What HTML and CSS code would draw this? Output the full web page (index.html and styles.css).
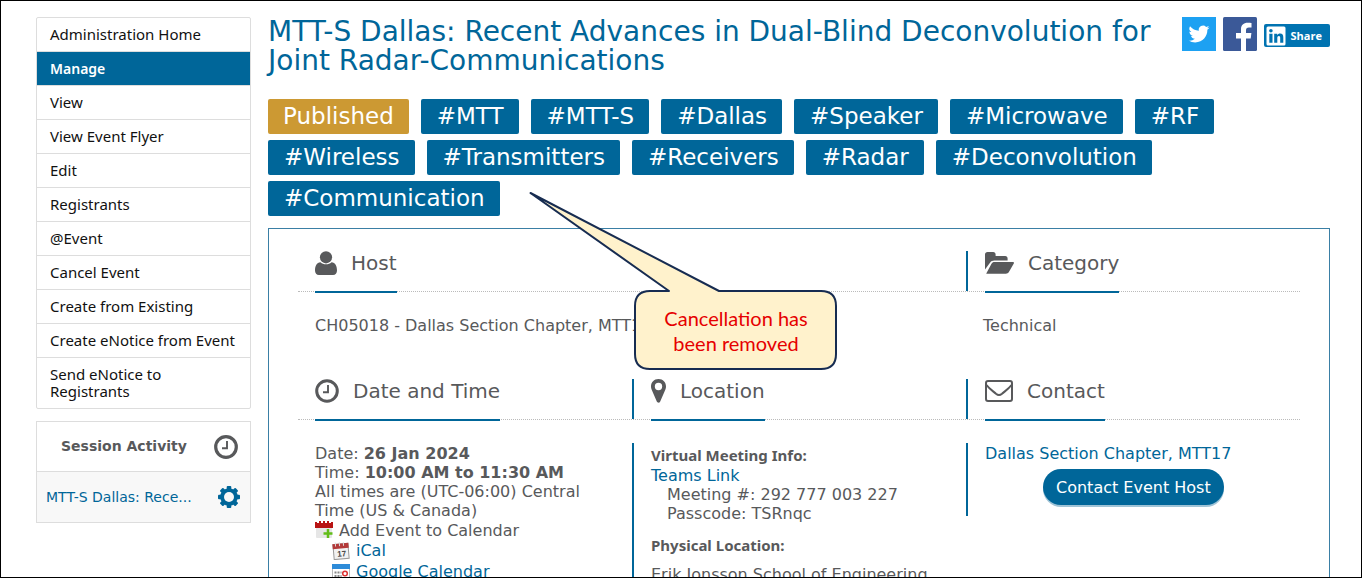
FILE: index.html
```html
<!DOCTYPE html>
<html lang="en">
<head>
<meta charset="UTF-8">
<title>MTT-S Dallas: Manage Event</title>
<meta name="viewport" content="width=device-width, initial-scale=1">
<link rel="stylesheet" href="styles.css">
</head>
<body>
  <div class="page">
    <aside class="sidebar">
      <nav class="menu">
        <a href="#">Administration Home</a>
        <a href="#" class="active">Manage</a>
        <a href="#">View</a>
        <a href="#">View Event Flyer</a>
        <a href="#">Edit</a>
        <a href="#">Registrants</a>
        <a href="#">@Event</a>
        <a href="#">Cancel Event</a>
        <a href="#">Create from Existing</a>
        <a href="#">Create eNotice from Event</a>
        <a href="#">Send eNotice to Registrants</a>
      </nav>

      <div class="session">
        <div class="session-head">
          <span>Session Activity</span>
          <svg class="icon-clock" viewBox="0 0 24 24"><circle cx="12" cy="12" r="10.3" fill="none" stroke="currentColor" stroke-width="3.2"/><path d="M13 6v7.3H8" fill="none" stroke="currentColor" stroke-width="1.9"/></svg>
        </div>
        <div class="session-row">
          <a href="#">MTT-S Dallas: Rece...</a>
          <button class="gear" aria-label="Session settings">
            <svg viewBox="0 0 24 24"><g fill="currentColor"><rect x="9.7" y="1" width="4.6" height="22" rx="1"/><rect x="9.7" y="1" width="4.6" height="22" rx="1" transform="rotate(45 12 12)"/><rect x="9.7" y="1" width="4.6" height="22" rx="1" transform="rotate(90 12 12)"/><rect x="9.7" y="1" width="4.6" height="22" rx="1" transform="rotate(135 12 12)"/><circle cx="12" cy="12" r="8.8"/></g><circle cx="12" cy="12" r="5" fill="#f8f8f8"/></svg>
          </button>
        </div>
      </div>
    </aside>

    <main class="main">
      <header class="title-row">
        <h1>MTT-S Dallas: Recent Advances in Dual-Blind Deconvolution for Joint Radar-Communications</h1>
        <div class="share">
          <a href="#" aria-label="Share on Twitter">
            <svg class="square" viewBox="0 0 34 34"><rect width="34" height="34" fill="#1da1f2"/><path transform="translate(6.6 6.6) scale(.87)" fill="#fff" d="M23.95 4.57a10 10 0 0 1-2.82.77 4.96 4.96 0 0 0 2.16-2.72c-.95.55-2 .95-3.13 1.18a4.92 4.92 0 0 0-8.38 4.48A13.97 13.97 0 0 1 1.64 3.16a4.92 4.92 0 0 0 1.52 6.57 4.9 4.9 0 0 1-2.23-.61v.06a4.92 4.92 0 0 0 3.95 4.83 5 5 0 0 1-2.21.08 4.94 4.94 0 0 0 4.6 3.42A9.87 9.87 0 0 1 0 19.54a13.99 13.99 0 0 0 7.55 2.21c9.05 0 14-7.5 14-13.98 0-.21 0-.42-.02-.63a9.94 9.94 0 0 0 2.46-2.55z"/></svg>
          </a>
          <a href="#" aria-label="Share on Facebook">
            <svg class="square" viewBox="0 0 34 34"><rect width="34" height="34" rx="1.5" fill="#3b5998"/><path fill="#fff" d="M18 34V21.5h-5V16h5v-3.500c0-4.500 2.700-6.700 6.700-6.700 1.800 0 3.300.1 3.800.2v4.600h-2.600c-2 0-2.900 1-2.900 2.600V16h5.400l-.7 5.500H23V34z"/></svg>
          </a>
          <a href="#" class="linkedin">
            <svg viewBox="0 0 20 20"><rect x=".5" y=".5" width="19" height="19" rx="1.500" fill="#fff"/><g fill="#0073b1"><circle cx="4.900" cy="4.800" r="1.800"/><path d="M3.300 7.800h3.200v9H3.300zM8.200 7.800h3v1.300c.6-1 1.600-1.600 2.900-1.600 2.400 0 3.200 1.500 3.200 3.900v5.400h-3.100V12c0-1.200-.3-2-1.300-2-1.100 0-1.600.8-1.600 2v4.800H8.200z"/></g></svg>
            <span>Share</span>
          </a>
        </div>
      </header>

      <div class="tags">
        <span class="tag published">Published</span>
        <a href="#" class="tag">#MTT</a>
        <a href="#" class="tag">#MTT-S</a>
        <a href="#" class="tag">#Dallas</a>
        <a href="#" class="tag">#Speaker</a>
        <a href="#" class="tag">#Microwave</a>
        <a href="#" class="tag">#RF</a>
        <a href="#" class="tag">#Wireless</a>
        <a href="#" class="tag">#Transmitters</a>
        <a href="#" class="tag">#Receivers</a>
        <a href="#" class="tag">#Radar</a>
        <a href="#" class="tag">#Deconvolution</a>
        <a href="#" class="tag">#Communication</a>
      </div>

      <div class="details">
        <div class="cols heads">
          <div class="head wide">
            <h2><svg class="icon-user" viewBox="0 0 22 24"><circle cx="11" cy="6.300" r="6.100"/><path d="M5.500 11.200c1.500 1.400 3.300 2.100 5.500 2.100s4-.7 5.500-2.100c3.800.4 5.500 3.600 5.500 8.200 0 2.700-1.500 4.600-4 4.600H4c-2.500 0-4-1.900-4-4.600 0-4.600 1.700-7.800 5.500-8.200z"/></svg>Host</h2>
          </div>
          <div class="head ruled">
            <h2><svg class="icon-folder" viewBox="0 0 29 22"><path d="M0 17.500V2.500C0 1 1 0 2.500 0h5.700c1.500 0 2.400 1 2.400 2.500V4h9.600c1.500 0 2.400 1 2.400 2.400v2.100H9.200c-1.600 0-3 .7-4 1.900z"/><path d="M1.400 21.200 6.500 11.800c.6-1.200 1.600-1.800 3-1.800H28c1 0 1.200.7.800 1.500l-4.900 8.600c-.7 1.200-1.700 1.700-3 1.700H2c-.7 0-.9-.2-.6-.6z"/></svg>Category</h2>
          </div>
        </div>
        <div class="cols bodies first">
          <div class="body wide">CH05018 - Dallas Section Chapter, MTT17</div>
          <div class="body last">Technical</div>
        </div>

        <div class="cols heads">
          <div class="head">
            <h2><svg class="icon-clock" viewBox="0 0 24 24"><circle cx="12" cy="12" r="10.3" fill="none" stroke="currentColor" stroke-width="3"/><path d="M13 6v7.300H8" fill="none" stroke="currentColor" stroke-width="1.900"/></svg>Date and Time</h2>
          </div>
          <div class="head ruled">
            <h2><svg class="icon-pin" viewBox="0 0 15 24"><path fill-rule="evenodd" d="M7.500 0C12 0 15 3.200 15 7.500c0 1.200-.2 2.100-.6 3L9.200 22.500c-.6 1.600-2.800 1.600-3.400 0L.6 10.500C.2 9.600 0 8.700 0 7.500 0 3.200 3 0 7.500 0zm0 3.800a3.700 3.700 0 1 0 0 7.400 3.700 3.700 0 0 0 0-7.400z"/></svg>Location</h2>
          </div>
          <div class="head ruled">
            <h2><svg class="icon-mail" viewBox="0 0 28 22"><g fill="none" stroke="currentColor" stroke-width="2"><rect x="1" y="1" width="26" height="20" rx="2"/><path d="M1.500 5c3 4 7 6.500 9.500 8.800 2 1.700 4 1.700 6 0C19.500 11.500 23.500 9 26.500 5"/></g></svg>Contact</h2>
          </div>
        </div>
        <div class="cols bodies">
          <div class="body">
            <div>Date: <b>26 Jan 2024</b></div>
            <div>Time: <b>10:00 AM to 11:30 AM</b></div>
            <div>All times are (UTC-06:00) Central Time (US &amp; Canada)</div>
            <div class="cal-title">
              <svg viewBox="0 0 18 18"><rect x="1" y="2" width="16" height="15" rx="1" fill="#e6e6e6"/><path d="M0 1h2v1h2V0h2v2h2V0h2v2h2V0h2v2h2V1h2v6H0z" fill="#b81414"/><path d="M13 8v9M8.500 12.500h9" stroke="#62bd19" stroke-width="2.500"/></svg>
              Add Event to Calendar
            </div>
            <ul class="calendars">
              <li>
                <svg viewBox="0 0 18 18"><g transform="rotate(-5 9 9)"><rect x="1.500" y="2" width="15" height="15" fill="#f2f2f2" stroke="#999"/><rect x="1" y="1.500" width="16" height="5" fill="#b33a3a"/><path d="M4 0v4M8 0v4M12 0v4" stroke="#ddd"/><text x="5" y="14.500" class="day">17</text></g></svg>
                <a href="#">iCal</a>
              </li>
              <li>
                <svg viewBox="0 0 18 18"><rect x=".5" y="1.500" width="17" height="16" fill="#fff" stroke="#bbb"/><rect y="1" width="18" height="5" fill="#2d8bd8"/><path d="M2.500 9.500h7M2.500 13h7" stroke="#888" stroke-width="2" stroke-dasharray="2 1"/><circle cx="13" cy="10.500" r="2.300" fill="none" stroke="#d33" stroke-width="1.500"/></svg>
                <a href="#">Google Calendar</a>
              </li>
            </ul>
          </div>
          <div class="body ruled place">
            <h3>Virtual Meeting Info:</h3>
            <a href="#">Teams Link</a>
            <div class="indent">Meeting #: 292 777 003 227</div>
            <div class="indent">Passcode: TSRnqc</div>
            <h3 class="physical">Physical Location:</h3>
            <div>Erik Jonsson School of Engineering</div>
          </div>
          <div class="body ruled contact">
            <a href="#">Dallas Section Chapter, MTT17</a>
            <button class="btn-contact">Contact Event Host</button>
          </div>
        </div>
      </div>

      <div class="callout">
        <svg viewBox="0 0 309 180"><path d="M1.500 2 190 100h102q15 0 15 15v48q0 15-15 15H121q-15 0-15-15v-48q0-15 15-15h19z" fill="#fff2cc" stroke="#172c51" stroke-width="2" stroke-linejoin="round"/></svg>
        <p>Cancellation has<br>been removed</p>
      </div>
    </main>
  </div>
</body>
</html>
```
FILE: styles.css
```css
* {
  box-sizing: border-box;
}

body {
  margin: 0;
  font-family: Verdana, "DejaVu Sans", sans-serif;
  font-size: 16px;
  line-height: 19px;
  color: #58595b;
  background-color: #fff;
}

a {
  color: #006699;
  text-decoration: none;
}

h1, h2, h3, p, ul {
  margin: 0;
  padding: 0;
  font-weight: normal;
}

svg {
  display: block;
  flex: none;
}

.page {
  display: flex;
  gap: 17px;
  height: 100vh;
  padding: 16px 31px 0 35px;
  border: 1px solid #000;
  overflow: hidden;
}

/* Sidebar */
.sidebar {
  flex: none;
  width: 215px;
}

.menu {
  border: 1px solid #ddd;
  border-radius: 2px;
  margin-bottom: 12px;
}

.menu a {
  display: block;
  padding: 8px 13px;
  border-bottom: 1px solid #ddd;
  font-family: "Noto Sans", sans-serif;
  font-size: 15px;
  line-height: 17px;
  color: #111;
}

.menu a:last-child {
  border-bottom: none;
}

.menu .active {
  background-color: #006699;
  color: white;
  font-size: 14px;
  font-weight: 600;
}

.session {
  border: 1px solid #ddd;
  font-size: 14px;
}

.session-head,
.session-row {
  display: flex;
  align-items: center;
  justify-content: space-between;
  height: 50px;
}

.session-head {
  padding: 0 12px 0 24px;
  font-weight: bold;
  border-bottom: 1px solid #ddd;
}

.session-row {
  padding: 0 9px;
  background-color: #f8f8f8;
}

.icon-clock {
  width: 24px;
  height: 24px;
}

.gear {
  padding: 0;
  border: none;
  background: none;
  color: #006699;
  cursor: pointer;
}

.gear svg {
  width: 24px;
  height: 24px;
}

/* Title and share buttons */
.main {
  position: relative;
  flex: 1;
  min-width: 0;
}

.title-row {
  display: flex;
  justify-content: space-between;
  gap: 20px;
  margin-bottom: 24px;
}

h1 {
  flex: 1;
  font-size: 28px;
  line-height: 29px;
  color: #006699;
}

.share {
  display: flex;
  align-items: flex-start;
  gap: 7px;
}

.square {
  width: 34px;
  height: 34px;
}

.linkedin {
  display: flex;
  align-items: center;
  gap: 5px;
  height: 23px;
  margin-top: 7px;
  padding: 0 8px 0 2px;
  border-radius: 2px;
  background-color: #0073b1;
  color: white;
  font: bold 11px "Open Sans", sans-serif;
}

.linkedin svg {
  width: 20px;
  height: 20px;
}

/* Tags */
.tags {
  display: flex;
  flex-wrap: wrap;
  gap: 6px 12px;
  margin-bottom: 12px;
}

.tag {
  padding: 0 15px 0 16px;
  border-radius: 2px;
  background-color: #006699;
  color: white;
  font-size: 23px;
  line-height: 35px;
}

.published {
  padding: 0 15px;
  background-color: #cc9933;
}

/* Details panel */
.details {
  padding: 22px 29px 0;
  border: 1px solid #3a7fa5;
}

.cols {
  display: grid;
  grid-template-columns: repeat(3, 1fr);
}

.wide {
  grid-column: span 2;
}

.heads {
  height: 41px;
  border-bottom: 1px dotted #bbb;
}

.head {
  height: 42px;
  padding-left: 17px;
}

.head h2 {
  display: inline-flex;
  align-items: center;
  gap: 14px;
  height: 42px;
  padding-bottom: 16px;
  border-bottom: 2px solid #006699;
  font-size: 20px;
  line-height: 24px;
}

.head svg {
  fill: currentColor;
}

.ruled {
  border-left: 2px solid #006699;
}

.head.ruled {
  height: 40px;
}

.icon-user {
  width: 22px;
  height: 24px;
}

.icon-folder {
  width: 29px;
  height: 22px;
}

.icon-pin {
  width: 15px;
  height: 24px;
}

.icon-mail {
  width: 28px;
  height: 22px;
}

.bodies {
  align-items: start;
  padding-top: 23px;
}

.bodies.first {
  padding-bottom: 44px;
}

.body {
  padding: 1px 16px 0 17px;
}

.body.ruled {
  min-height: 73px;
}

.place {
  padding-bottom: 20px;
}

.place h3 {
  font: bold 15px/22px "Noto Sans", sans-serif;
}

.place .physical {
  margin: 11px 0 9px;
}

.indent {
  padding-left: 16px;
}

.cal-title {
  display: flex;
  align-items: center;
  gap: 6px;
  height: 20px;
}

.cal-title svg,
.calendars svg {
  width: 18px;
  height: 18px;
}

.calendars {
  list-style: none;
  padding-left: 17px;
}

.calendars li {
  display: flex;
  align-items: center;
  gap: 6px;
  height: 21px;
}

.day {
  font: bold 8px "Liberation Sans", sans-serif;
  fill: #444;
}

.contact {
  display: flex;
  flex-direction: column;
  align-items: flex-start;
  gap: 6px;
}

.btn-contact {
  height: 36px;
  margin-left: 58px;
  padding: 0 13px;
  border: none;
  border-radius: 18px;
  background-color: #006699;
  box-shadow: 0 2px 0 #9fc3d6;
  color: white;
  font: 16px Verdana, "DejaVu Sans", sans-serif;
  cursor: pointer;
}

/* Callout bubble with its pointer */
.callout {
  position: absolute;
  top: 174px;
  left: 261px;
  width: 309px;
  height: 180px;
  padding: 115px 2px 0 107px;
}

.callout svg {
  position: absolute;
  top: 0;
  left: 0;
  width: 309px;
  height: 180px;
}

.callout p {
  position: relative;
  font: 20px/25px Lato, sans-serif;
  color: #e60000;
  text-align: center;
}
```
